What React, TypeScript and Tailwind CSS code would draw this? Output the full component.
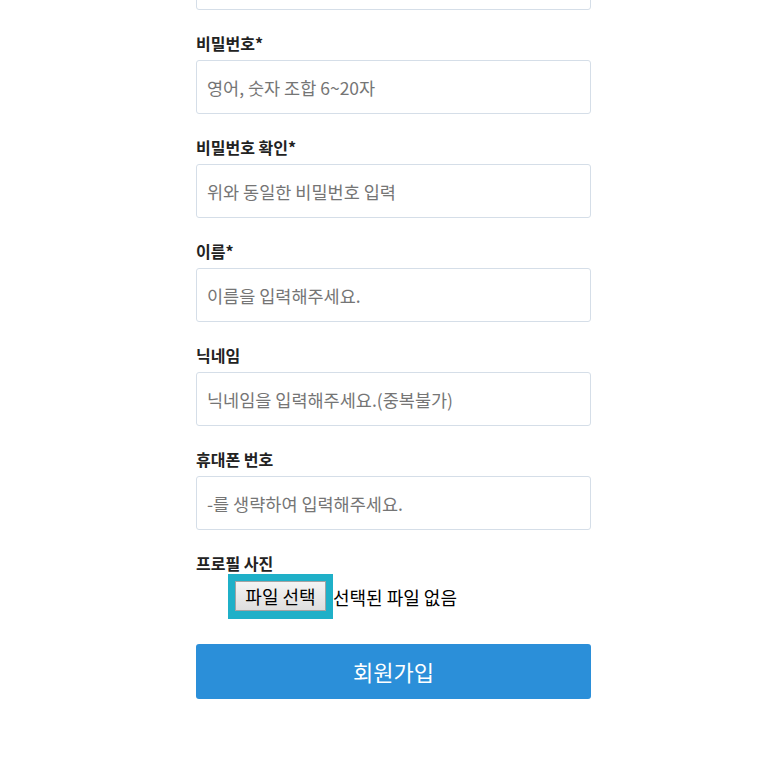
import React from 'react';

const fields = [
  { label: '비밀번호*', placeholder: '영어, 숫자 조합 6~20자', type: 'password' },
  { label: '비밀번호 확인*', placeholder: '위와 동일한 비밀번호 입력', type: 'password' },
  { label: '이름*', placeholder: '이름을 입력해주세요.', type: 'text' },
  { label: '닉네임', placeholder: '닉네임을 입력해주세요.(중복불가)', type: 'text' },
  { label: '휴대폰 번호', placeholder: '-를 생략하여 입력해주세요.', type: 'text' },
];

const font = "font-['Noto_Sans_CJK_KR','Noto_Sans',sans-serif]";

export default function App() {
  return (
    <div className={`min-h-[762px] w-[782px] bg-white overflow-hidden ${font}`}>
      <div className="ml-[196px] w-[395px] -mt-[44px]">
        <input
          type="text"
          className="block w-full h-[54px] border border-[#d5dee8] rounded-[3px] px-[10px] outline-none"
        />

        {fields.map((f) => (
          <div key={f.label}>
            <label className="block mt-[22px] mb-[6px] h-[22px] leading-[22px] text-[16px] font-bold text-[#222]">
              {f.label}
            </label>
            <input
              type={f.type}
              placeholder={f.placeholder}
              className="block w-full h-[54px] border border-[#d5dee8] rounded-[3px] px-[10px] text-[17.5px] text-[#333] placeholder:text-[#757575] outline-none"
            />
          </div>
        ))}

        <label className="block mt-[22px] h-[22px] leading-[22px] text-[16px] font-bold text-[#222]">
          프로필 사진
        </label>
        <div className="flex items-center ml-[32px] h-[45px]">
          <div className="bg-[#1fb0c8] pt-[7px] pb-[8px] pl-[7px] pr-[7px]">
            <div className="w-[91px] h-[30px] border border-[#a3a3a3] bg-gradient-to-b from-[#f4f4f4] to-[#dedede] flex items-center justify-center text-[18px] text-black">
              파일 선택
            </div>
          </div>
          <span className="text-[18px] text-black leading-none">선택된 파일 없음</span>
        </div>

        <button className="mt-[25px] w-full h-[55px] rounded-[3px] bg-[#2b8fd9] text-white text-[22px]">
          회원가입
        </button>
      </div>
    </div>
  );
}
